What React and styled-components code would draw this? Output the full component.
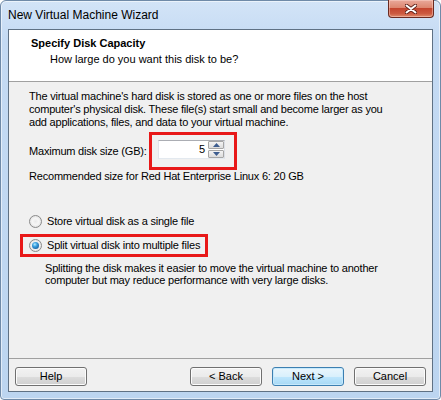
import React, {useState} from 'react'
import styled, {createGlobalStyle} from 'styled-components'

const Global = createGlobalStyle`
body{
    margin:0;
    background:#fff;
    font-family:"Liberation Sans", Arial, sans-serif;
}
`
const Frame = styled.div`
width:441px;
height:400px;
box-sizing:border-box;
display:flex;
flex-direction:column;
padding:0 7px 7px 7px;
border:1px solid #6f8aa8;
border-radius:6px 6px 4px 4px;
background:linear-gradient(to bottom, #d3e4f7 0px, #c4daf3 40px, #bcd5f0 100%);
box-shadow:inset 0 0 0 1px rgba(255,255,255,0.55);
`
const TitleBar = styled.div`
height:28px;
display:flex;
justify-content:space-between;
align-items:flex-start;
`
const Caption = styled.div`
margin-top:7px;
font-size:12px;
color:#000;
`
const Close = styled.div`
width:46px;
height:18px;
margin-right:-1px;
margin-top:-1px;
display:flex;
align-items:center;
justify-content:center;
box-sizing:border-box;
border:1px solid #6b2a20;
border-top:none;
border-radius:0 0 4px 4px;
background:linear-gradient(to bottom, #e9a99b 0%, #dd8670 45%, #c4452f 50%, #cc5a40 80%, #e08b6b 100%);
box-shadow:inset 0 0 0 1px rgba(255,220,210,0.45);
`
const Client = styled.div`
flex:1;
display:flex;
flex-direction:column;
border:1px solid #5f7184;
background:#f0f0f0;
font-size:11px;
letter-spacing:-0.2px;
color:#000;
line-height:13px;
`
const Header = styled.div`
height:52px;
box-sizing:border-box;
background:#fff;
border-bottom:1px solid #a0a0a0;
padding:7px 0 0 22px;
`
const HeadTitle = styled.div`
font-weight:bold;
letter-spacing:0;
`
const HeadSub = styled.div`
margin-top:3px;
padding-left:19px;
letter-spacing:0;
`
const Body = styled.div`
flex:1;
padding:8px 20px 0 20px;
display:flex;
flex-direction:column;
`
const Para = styled.p`
margin:0;
white-space:nowrap;
`
const DiskRow = styled.div`
display:flex;
align-items:center;
margin-top:3px;
`
const Label = styled.span`
width:120px;
flex-shrink:0;
white-space:nowrap;
`
const Highlight = styled.div`
display:inline-flex;
align-items:center;
border:3px solid #e81818;
`
const SpinBox = styled.div`
display:flex;
width:67px;
height:19px;
box-sizing:border-box;
margin:5px 9px 8px 6px;
border:1px solid #abadb3;
border-left-color:#e2e3ea;
border-right-color:#dbdfe6;
border-bottom-color:#e3e9ef;
background:#fff;
`
const SpinValue = styled.div`
flex:1;
text-align:right;
padding-right:3px;
line-height:17px;
`
const SpinButtons = styled.div`
width:16px;
display:flex;
flex-direction:column;
gap:1px;
`
const SpinBtn = styled.div`
flex:1;
display:flex;
align-items:center;
justify-content:center;
border:1px solid #a6a6a6;
border-radius:1px;
background:linear-gradient(to bottom, #f4f4f4, #dcdcdc);
`
const Recommended = styled.div``
const Options = styled.div`
margin-top:30px;
display:flex;
flex-direction:column;
`
const RadioRow = styled.label`
display:flex;
align-items:center;
gap:5px;
height:17px;
padding:${p => p.boxed ? '0 5px 0 6px' : '0'};
`
const Boxed = styled.div`
margin:4px 0 0 -9px;
align-self:flex-start;
border:3px solid #e81818;
`
const Radio = styled.span`
width:13px;
height:13px;
box-sizing:border-box;
border-radius:50%;
border:1px solid #8a8a8a;
background:radial-gradient(circle at 50% 50%, #e9e9e9 0%, #f6f6f6 40%, #d6d6d6 100%);
display:flex;
align-items:center;
justify-content:center;
flex-shrink:0;
&::after{
    content:'';
    display:${p => p.checked ? 'block' : 'none'};
    width:7px;
    height:7px;
    border-radius:50%;
    background:radial-gradient(circle at 40% 35%, #b4ecff 0%, #3aa0e0 35%, #0f4f8e 90%);
}
`
const Desc = styled.div`
margin-top:5px;
padding-left:16px;
line-height:12px;
white-space:nowrap;
`
const Footer = styled.div`
display:flex;
align-items:center;
gap:10px;
height:33px;
box-sizing:border-box;
padding:8px 6px 6px 6px;
border-top:1px solid #a0a0a0;
`
const Spacer = styled.div`
flex:1;
`
const Button = styled.button`
width:72px;
height:19px;
padding:0;
box-sizing:border-box;
font-family:inherit;
font-size:11px;
color:#000;
border-radius:3px;
border:1px solid ${p => p.primary ? '#3c7fb1' : '#707070'};
background:${p => p.primary
    ? 'linear-gradient(to bottom, #eaf6fd 0%, #d9f0fc 50%, #bee6fd 51%, #a7d9f5 100%)'
    : 'linear-gradient(to bottom, #f2f2f2 0%, #ebebeb 50%, #dddddd 51%, #cfcfcf 100%)'};
box-shadow:inset 0 0 0 1px ${p => p.primary ? '#c6e9fc' : '#fcfcfc'};
`

const Arrow = ({down}) => (
    <svg width="7" height="4" viewBox="0 0 7 4">
        <path d={down ? 'M0 0H7L3.5 4Z' : 'M0 4H7L3.5 0Z'} fill="#3d5d8f" />
    </svg>
)

const App = () => {
    const [split, setSplit] = useState(true)
    return (
        <>
            <Global />
            <Frame>
                <TitleBar>
                    <Caption>New Virtual Machine Wizard</Caption>
                    <Close>
                        <svg width="12" height="10" viewBox="0 0 12 10">
                            <path d="M1.5 1.5L10.5 8.5M10.5 1.5L1.5 8.5" stroke="#5a1e16" strokeWidth="3.6" strokeLinecap="round" />
                            <path d="M1.5 1.5L10.5 8.5M10.5 1.5L1.5 8.5" stroke="#fff" strokeWidth="2" strokeLinecap="round" />
                        </svg>
                    </Close>
                </TitleBar>
                <Client>
                    <Header>
                        <HeadTitle>Specify Disk Capacity</HeadTitle>
                        <HeadSub>How large do you want this disk to be?</HeadSub>
                    </Header>
                    <Body>
                        <Para>
                            The virtual machine's hard disk is stored as one or more files on the host<br />
                            computer's physical disk. These file(s) start small and become larger as you<br />
                            add applications, files, and data to your virtual machine.
                        </Para>
                        <DiskRow>
                            <Label>Maximum disk size (GB):</Label>
                            <Highlight>
                                <SpinBox>
                                    <SpinValue>5</SpinValue>
                                    <SpinButtons>
                                        <SpinBtn><Arrow /></SpinBtn>
                                        <SpinBtn><Arrow down /></SpinBtn>
                                    </SpinButtons>
                                </SpinBox>
                            </Highlight>
                        </DiskRow>
                        <Recommended>Recommended size for Red Hat Enterprise Linux 6: 20 GB</Recommended>
                        <Options>
                            <RadioRow onClick={() => setSplit(false)}>
                                <Radio checked={!split} />
                                <span>Store virtual disk as a single file</span>
                            </RadioRow>
                            <Boxed>
                                <RadioRow boxed onClick={() => setSplit(true)}>
                                    <Radio checked={split} />
                                    <span>Split virtual disk into multiple files</span>
                                </RadioRow>
                            </Boxed>
                            <Desc>
                                Splitting the disk makes it easier to move the virtual machine to another<br />
                                computer but may reduce performance with very large disks.
                            </Desc>
                        </Options>
                    </Body>
                    <Footer>
                        <Button>Help</Button>
                        <Spacer />
                        <Button>&lt; Back</Button>
                        <Button primary>Next &gt;</Button>
                        <Button>Cancel</Button>
                    </Footer>
                </Client>
            </Frame>
        </>
    )
}

export default App
